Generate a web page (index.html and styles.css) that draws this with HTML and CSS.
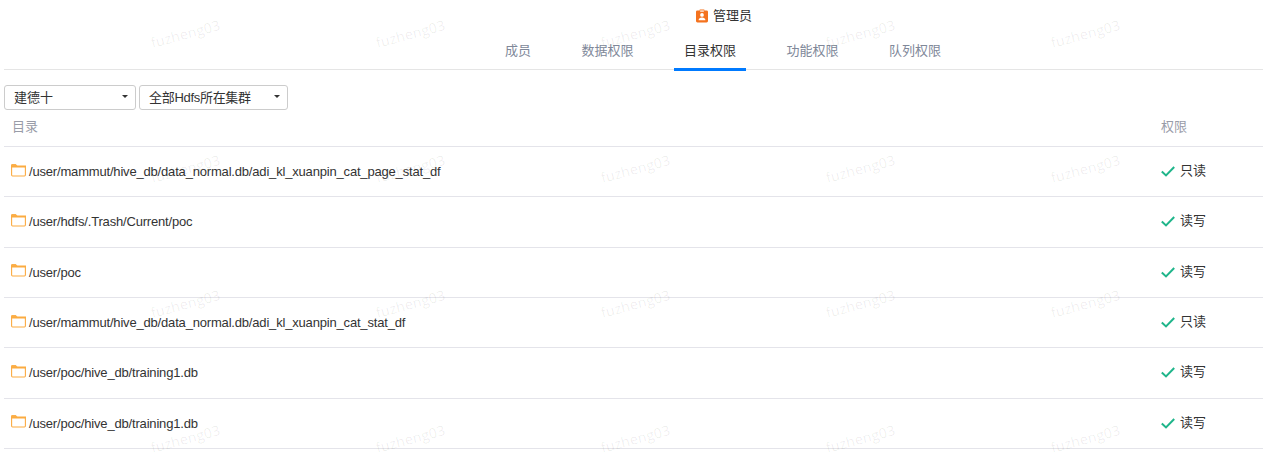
FILE: index.html
```html
<!DOCTYPE html>
<html lang="zh-CN">
<head>
<meta charset="utf-8">
<title>管理员</title>
<link rel="stylesheet" href="styles.css">
</head>
<body>
<div class="page">
  <header class="head">
    <div class="role">
      <svg class="role-icon" viewBox="0 0 13 14" width="12" height="14"><path fill="#f4721e" d="M1.500 1H4V0h5v1h2.500A1.500 1.500 0 0 1 13 2.500v10a1.500 1.500 0 0 1-1.500 1.500h-10A1.500 1.500 0 0 1 0 12.500v-10A1.500 1.500 0 0 1 1.500 1z"/><rect x="4.500" y="1" width="4" height="1.300" fill="#fff"/><circle cx="6.500" cy="5.800" r="2" fill="#fff"/><path fill="#fff" d="M2.800 11.500c0-2 1.700-3 3.700-3s3.700 1 3.700 3z"/></svg>
      <span>管理员</span>
    </div>
    <nav class="tabs">
      <a class="tab">成员</a>
      <a class="tab">数据权限</a>
      <a class="tab active">目录权限</a>
      <a class="tab">功能权限</a>
      <a class="tab">队列权限</a>
    </nav>
  </header>
  <div class="filters">
    <div class="select sel-a"><span>建德十</span><i class="caret"></i></div>
    <div class="select sel-b"><span>全部Hdfs所在集群</span><i class="caret"></i></div>
  </div>
  <div class="table">
    <div class="row row-head"><div>目录</div><div>权限</div></div>
    <div class="row"><div class="path"><svg class="folder" viewBox="0 0 15 13" width="15" height="13"><use href="#fd"/></svg>/user/mammut/hive_db/data_normal.db/adi_kl_xuanpin_cat_page_stat_df</div><div class="perm"><svg class="check" viewBox="0 0 14 11" width="14" height="11"><use href="#ck"/></svg>只读</div></div>
    <div class="row"><div class="path"><svg class="folder" viewBox="0 0 15 13" width="15" height="13"><use href="#fd"/></svg>/user/hdfs/.Trash/Current/poc</div><div class="perm"><svg class="check" viewBox="0 0 14 11" width="14" height="11"><use href="#ck"/></svg>读写</div></div>
    <div class="row"><div class="path"><svg class="folder" viewBox="0 0 15 13" width="15" height="13"><use href="#fd"/></svg>/user/poc</div><div class="perm"><svg class="check" viewBox="0 0 14 11" width="14" height="11"><use href="#ck"/></svg>读写</div></div>
    <div class="row"><div class="path"><svg class="folder" viewBox="0 0 15 13" width="15" height="13"><use href="#fd"/></svg>/user/mammut/hive_db/data_normal.db/adi_kl_xuanpin_cat_stat_df</div><div class="perm"><svg class="check" viewBox="0 0 14 11" width="14" height="11"><use href="#ck"/></svg>只读</div></div>
    <div class="row"><div class="path"><svg class="folder" viewBox="0 0 15 13" width="15" height="13"><use href="#fd"/></svg>/user/poc/hive_db/training1.db</div><div class="perm"><svg class="check" viewBox="0 0 14 11" width="14" height="11"><use href="#ck"/></svg>读写</div></div>
    <div class="row"><div class="path"><svg class="folder" viewBox="0 0 15 13" width="15" height="13"><use href="#fd"/></svg>/user/poc/hive_db/training1.db</div><div class="perm"><svg class="check" viewBox="0 0 14 11" width="14" height="11"><use href="#ck"/></svg>读写</div></div>
  </div>
</div>
<svg class="defs" width="0" height="0">
  <defs>
    <g id="fd"><path fill="#fbb14e" d="M0 1.200A1.200 1.200 0 0 1 1.200 0h3.600l1.700 2H0z"/><path fill="none" stroke="#fbab41" stroke-width="1.100" d="M.6 2.500h12.900a.9.900 0 0 1 .9.900v7.700a.9.900 0 0 1-.9.900H1.500a.9.900 0 0 1-.9-.9z"/><rect x="0" y="1.500" width="15" height="2" fill="#fbab41"/></g>
    <path id="ck" fill="none" stroke="#1fb58a" stroke-width="2" d="M.8 5.500 5 9.400 13.200 1"/>
  </defs>
</svg>
<div class="marks" aria-hidden="true">
  <div class="marks-grid">
    <span>fuzheng03</span><span>fuzheng03</span><span>fuzheng03</span><span>fuzheng03</span><span>fuzheng03</span>
    <span>fuzheng03</span><span>fuzheng03</span><span>fuzheng03</span><span>fuzheng03</span><span>fuzheng03</span>
    <span>fuzheng03</span><span>fuzheng03</span><span>fuzheng03</span><span>fuzheng03</span><span>fuzheng03</span>
    <span>fuzheng03</span><span>fuzheng03</span><span>fuzheng03</span><span>fuzheng03</span><span>fuzheng03</span>
  </div>
</div>
</body>
</html>
```
FILE: styles.css
```css
* { box-sizing: border-box; }
html, body { margin: 0; height: 458px; overflow: hidden; background: #fff; }
body {
  position: relative;
  font-family: "Liberation Sans", "Noto Sans CJK SC", sans-serif;
  font-size: 13px;
  color: #333;
}
.page { padding-left: 4px; }
.head {
  padding-left: 179px;
  border-bottom: 1px solid #e5e5e5;
  height: 70px;
}
.role {
  height: 32px;
  padding-left: 2px;
  display: flex;
  align-items: center;
  justify-content: center;
  gap: 5px;
  line-height: 32px;
}
.role-icon { display: block; margin-top: -1px; }
.tabs {
  display: flex;
  justify-content: center;
  gap: 30.5px;
  height: 38px;
}
.tab {
  padding: 0 10px;
  height: 39px;
  line-height: 38px;
  color: #808899;
  border-bottom: 3px solid transparent;
}
.tab.active { color: #333; border-bottom-color: #007aff; }
.filters {
  display: flex;
  gap: 3px;
  padding-top: 15px;
}
.select {
  height: 25px;
  padding: 0 7px 2px 9px;
  border: 1px solid #ccc;
  border-radius: 3px;
  display: flex;
  align-items: center;
  justify-content: space-between;
}
.sel-a { width: 132px; }
.sel-b { width: 149px; letter-spacing: -.3px; }
.caret {
  width: 0;
  height: 0;
  border-left: 3.5px solid transparent;
  border-right: 3.5px solid transparent;
  border-top: 3.5px solid #333;
}
.row {
  display: grid;
  grid-template-columns: 1150px 1fr;
  align-items: center;
  height: 50.33px;
  padding: 0 0 0 7px;
  border-bottom: 1px solid #e4e4ea;
}
.row-head {
  height: 37px;
  padding: 0 0 6px 8px;
  grid-template-columns: 1149px 1fr;
  color: #999ca8;
}
.path { display: flex; align-items: center; letter-spacing: -.18px; }
.folder { margin-right: 3px; margin-top: -3px; flex: none; }
.perm { display: flex; align-items: center; gap: 5px; padding-bottom: 4px; }
.check { flex: none; margin-top: 4px; }
.defs { position: absolute; }
.marks {
  position: absolute;
  inset: 0;
  overflow: hidden;
  pointer-events: none;
}
.marks-grid {
  margin: -34px 0 0 73px;
  display: grid;
  grid-template-columns: repeat(5, 225px);
  grid-auto-rows: 135px;
}
.marks span {
  display: flex;
  align-items: center;
  justify-content: center;
  font-family: "Open Sans", sans-serif;
  font-size: 14px;
  letter-spacing: .3px;
  color: rgba(0, 0, 0, .07);
  transform: rotate(-15deg);
}
```
